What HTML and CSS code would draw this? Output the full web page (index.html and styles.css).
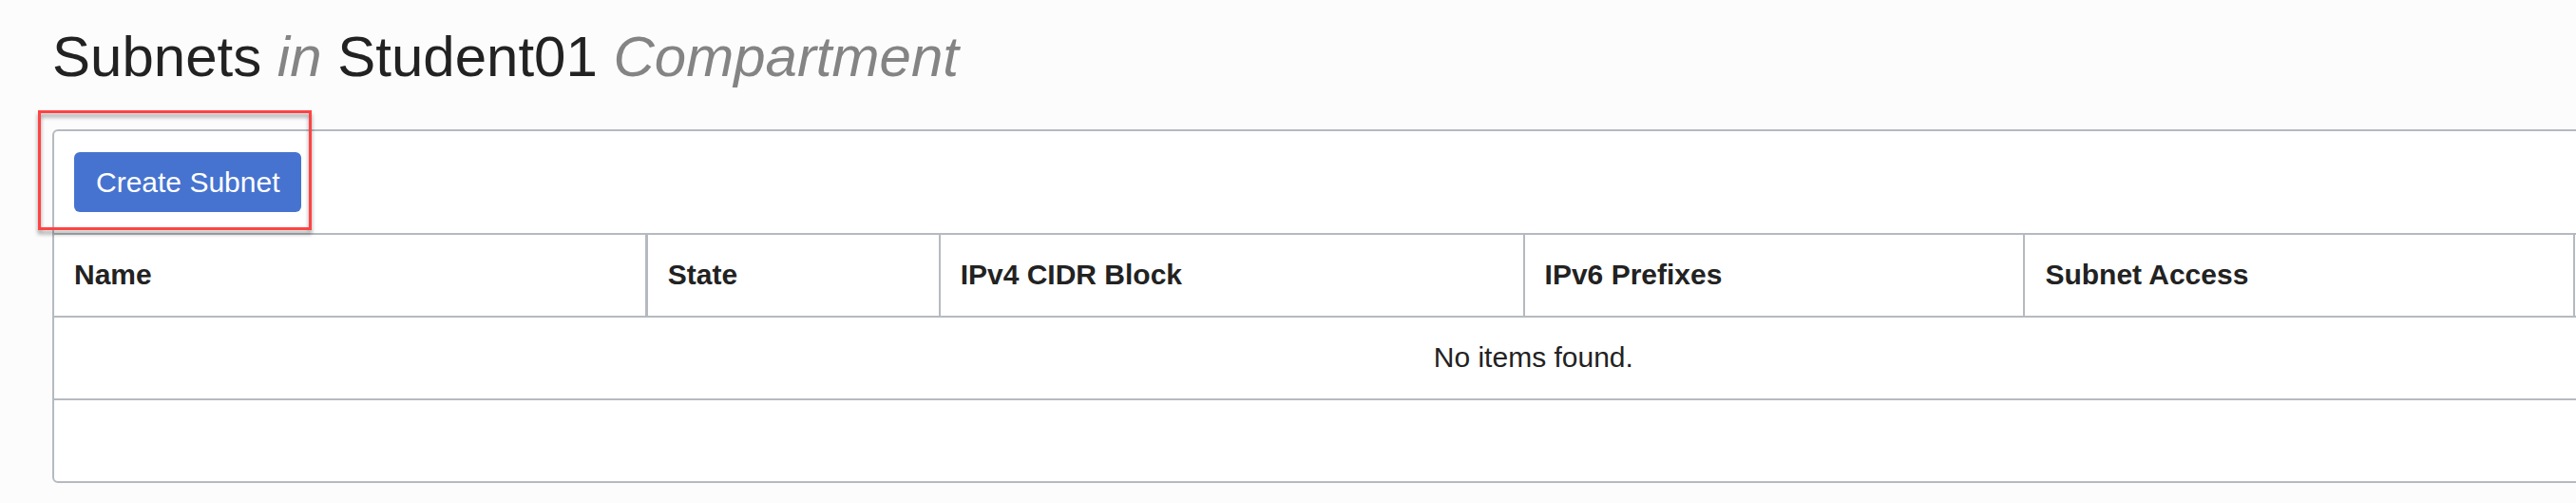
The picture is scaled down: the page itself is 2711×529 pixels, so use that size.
FILE: index.html
```html
<!DOCTYPE html>
<html lang="en">
<head>
<meta charset="utf-8">
<title>Subnets</title>
<link rel="stylesheet" href="styles.css">
</head>
<body>
<main class="page">
  <h1 class="title">Subnets <em class="muted">in</em> Student01 <em class="muted">Compartment</em></h1>
  <section class="panel">
    <div class="toolbar">
      <div class="callout">
        <button type="button" class="button">Create Subnet</button>
      </div>
    </div>
    <table class="table">
      <colgroup>
        <col class="col-name">
        <col class="col-state">
        <col class="col-cidr">
        <col class="col-prefixes">
        <col class="col-access">
        <col>
      </colgroup>
      <thead>
        <tr>
          <th scope="col">Name</th>
          <th scope="col" class="resize">State</th>
          <th scope="col">IPv4 CIDR Block</th>
          <th scope="col">IPv6 Prefixes</th>
          <th scope="col">Subnet Access</th>
          <td></td>
        </tr>
      </thead>
      <tbody>
        <tr>
          <td colspan="6" class="empty">No items found.</td>
        </tr>
      </tbody>
    </table>
    <div class="footer"></div>
  </section>
</main>
</body>
</html>
```
FILE: styles.css
```css
:root {
  --line: #b5bac0;
}

* {
  box-sizing: border-box;
}

body {
  margin: 0;
  background: #fcfcfc;
  color: #222;
  font-family: "Liberation Sans", Arial, sans-serif;
  font-size: 30px;
  line-height: 34px;
}

.page {
  overflow: hidden;
  padding: 26px 0 21px;
}

.title {
  margin: 0 0 42px 55px;
  font-size: 60px;
  font-weight: 400;
  line-height: 68px;
}

.muted {
  color: #848484;
}

/* The list is wider than the window and runs off its right edge. */
.panel {
  width: 115%;
  margin-left: 55px;
  border: 2px solid var(--line);
  border-radius: 6px;
  background: #fff;
}

.toolbar {
  display: flex;
  padding: 22px 21px;
}

.callout {
  position: relative;
  display: flex;
}

.callout::after {
  content: "";
  position: absolute;
  inset: -44px -11px -19px -38px;
  border: 3px solid #ff4343;
  filter: drop-shadow(0 4px 2px rgba(0, 0, 0, 0.4));
  pointer-events: none;
}

.button {
  padding: 15px 23px 14px;
  border: 0;
  border-radius: 6px;
  background: #4673cf;
  color: #fff;
  font: inherit;
}

.table {
  width: 100%;
  table-layout: fixed;
  border-collapse: separate;
  border-spacing: 0;
}

.col-name { width: 19.97%; }
.col-state { width: 9.92%; }
.col-cidr { width: 19.75%; }
.col-prefixes { width: 16.92%; }
.col-access { width: 18.58%; }

.table th,
.table td {
  padding: 25px 21px 26px;
  border-top: 2px solid var(--line);
  border-left: 2px solid var(--line);
  text-align: left;
}

.table th:first-child,
.table .empty {
  border-left: 0;
}

.table .resize {
  border-left-width: 3px;
}

.table .empty {
  text-align: center;
}

.footer {
  height: 87px;
  border-top: 2px solid var(--line);
}
```
